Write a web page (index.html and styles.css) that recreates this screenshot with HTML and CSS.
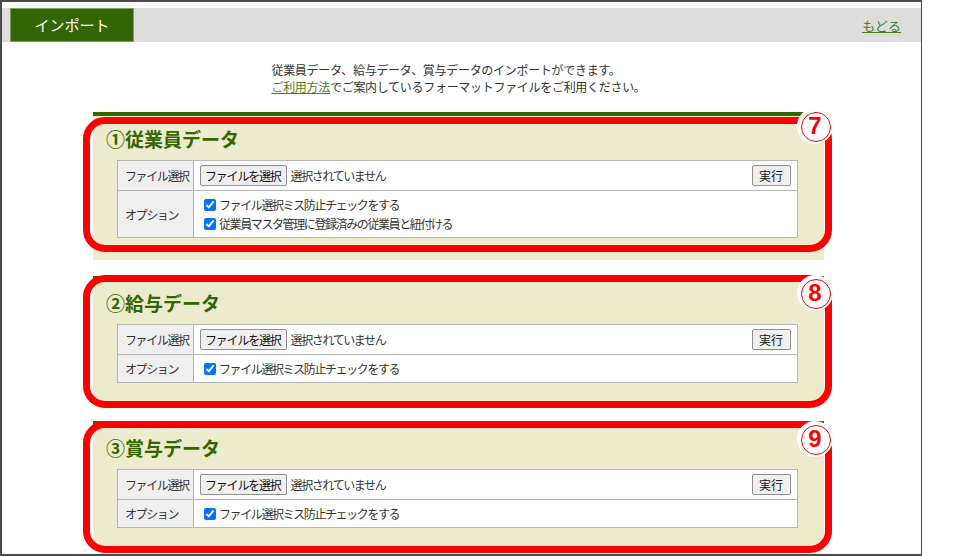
FILE: index.html
```html
<!DOCTYPE html>
<html lang="ja">
<head>
    <meta charset="UTF-8">
    <title>インポート</title>
    <link rel="stylesheet" href="styles.css">
</head>
<body>

    <div class="window">

        <div class="header">
            <div class="tab">インポート</div>
            <a href="#" class="back">もどる</a>
        </div>

        <div class="main">
            <div class="lead-wrap">
                <p class="lead">
                    従業員データ、給与データ、賞与データのインポートができます。<br>
                    <a href="#">ご利用方法</a>でご案内しているフォーマットファイルをご利用ください。
                </p>
            </div>

            <section class="import-box box-1">
                <span class="mark"></span>
                <span class="badge">7</span>
                <h2>①従業員データ</h2>
                <table class="import-table">
                    <tr>
                        <th>ファイル選択</th>
                        <td>
                            <div class="file-row">
                                <button class="btn">ファイルを選択</button>
                                <span class="file-name">選択されていません</span>
                                <button class="btn btn-run">実行</button>
                            </div>
                        </td>
                    </tr>
                    <tr>
                        <th>オプション</th>
                        <td>
                            <label class="opt"><input type="checkbox" checked>ファイル選択ミス防止チェックをする</label>
                            <label class="opt"><input type="checkbox" checked>従業員マスタ管理に登録済みの従業員と紐付ける</label>
                        </td>
                    </tr>
                </table>
            </section>

            <section class="import-box box-2">
                <span class="mark"></span>
                <span class="badge">8</span>
                <h2>②給与データ</h2>
                <table class="import-table">
                    <tr>
                        <th>ファイル選択</th>
                        <td>
                            <div class="file-row">
                                <button class="btn">ファイルを選択</button>
                                <span class="file-name">選択されていません</span>
                                <button class="btn btn-run">実行</button>
                            </div>
                        </td>
                    </tr>
                    <tr>
                        <th>オプション</th>
                        <td>
                            <label class="opt"><input type="checkbox" checked>ファイル選択ミス防止チェックをする</label>
                        </td>
                    </tr>
                </table>
            </section>

            <section class="import-box box-3">
                <span class="mark"></span>
                <span class="badge">9</span>
                <h2>③賞与データ</h2>
                <table class="import-table">
                    <tr>
                        <th>ファイル選択</th>
                        <td>
                            <div class="file-row">
                                <button class="btn">ファイルを選択</button>
                                <span class="file-name">選択されていません</span>
                                <button class="btn btn-run">実行</button>
                            </div>
                        </td>
                    </tr>
                    <tr>
                        <th>オプション</th>
                        <td>
                            <label class="opt"><input type="checkbox" checked>ファイル選択ミス防止チェックをする</label>
                        </td>
                    </tr>
                </table>
            </section>
        </div>

    </div>

</body>
</html>
```

FILE: styles.css
```css
/* base */
* {
    margin: 0;
    padding: 0;
    box-sizing: border-box;
}

body {
    background: #fff;
    font-family: "Noto Sans CJK JP", "Liberation Sans", sans-serif;
    color: #333;
}

.window {
    width: 922px;
    height: 556px;
    border: 2px solid #4a4a4a;
    border-right-width: 1px;
    padding-top: 6px;
    overflow: hidden;
}

/* header bar */
.header {
    display: flex;
    justify-content: space-between;
    align-items: center;
    height: 34px;
    background: #dddddd;
    padding: 0 20px 0 8px;
}

.tab {
    width: 124px;
    height: 34px;
    background: #336600;
    border: 1px solid #7fa35f;
    color: #fff;
    font-size: 15px;
    line-height: 32px;
    text-align: center;
}

.back {
    color: #4b7b1b;
    font-size: 13px;
    text-decoration: underline;
}

/* content */
.main {
    width: 731px;
    margin-left: 91px;
    padding-top: 19px;
}

.lead-wrap {
    text-align: center;
    margin-bottom: 15px;
}

.lead {
    display: inline-block;
    text-align: left;
    font-size: 12px;
    line-height: 17px;
    letter-spacing: -0.3px;
}

.lead a {
    color: #4b7b1b;
}

.import-box {
    position: relative;
    background: #ecebcd;
    border-top: 4px solid #336600;
    padding: 11px 0 22px 13px;
    margin-bottom: 16px;
}

.import-box h2 {
    font-size: 19px;
    line-height: 24px;
    color: #336600;
    margin-bottom: 9px;
}

.import-table {
    width: 681px;
    margin-left: 11px;
    border-collapse: collapse;
    background: #fff;
    font-size: 12px;
    letter-spacing: -1.4px;
}

.import-table th,
.import-table td {
    border: 1px solid #b5b5b5;
    padding: 4px 6px;
    text-align: left;
    font-weight: normal;
    vertical-align: middle;
    white-space: nowrap;
}

.import-table th {
    width: 76px;
    background: #efefef;
    padding: 4px 3px 4px 7px;
}

.file-row {
    display: flex;
    align-items: center;
}

.btn {
    font-family: inherit;
    font-size: 12px;
    letter-spacing: -1.2px;
    line-height: 15px;
    padding: 2px 5px 2px 4px;
    color: #111;
    background: #efefef;
    border: 1px solid #8f8f8f;
    border-radius: 2px;
}

.file-name {
    margin-left: 4px;
}

.btn-run {
    margin-left: auto;
    padding: 2px 7px 2px 6px;
    letter-spacing: 0;
}

.opt {
    display: flex;
    align-items: center;
    height: 19px;
}

.opt input {
    width: 12px;
    height: 12px;
    margin: 0 3px 0 4px;
    accent-color: #0075ff;
}

/* red callout frames and numbered badges */
.mark {
    position: absolute;
    left: -10px;
    right: -8px;
    border: 7px solid #ff0000;
    border-radius: 22px;
    pointer-events: none;
}

.box-1 .mark { top: 1px; bottom: 8px; }
.box-2 .mark { top: -5px; bottom: -3px; }
.box-3 .mark { top: -4px; bottom: -3px; }

.badge {
    position: absolute;
    right: -9px;
    width: 36px;
    height: 36px;
    border-radius: 50%;
    background: #fff;
    display: flex;
    align-items: center;
    justify-content: center;
    font-family: "Liberation Sans", sans-serif;
    font-size: 24px;
    font-weight: bold;
    color: #ff0000;
}

.badge::before {
    content: "";
    position: absolute;
    left: 4px;
    top: 4px;
    width: 28px;
    height: 28px;
    border: 1.5px solid #ff0000;
    border-radius: 50%;
}

.box-1 .badge { top: -8px; }
.box-2 .badge { top: -5px; }
.box-3 .badge { top: -4px; }
```
